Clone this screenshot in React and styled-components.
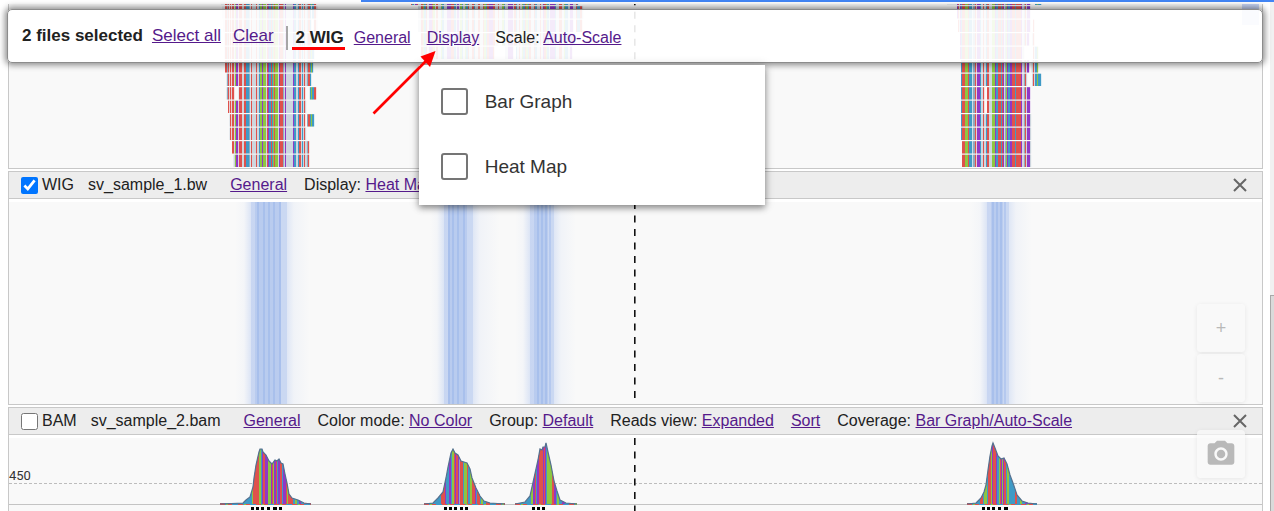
import React from "react";
import styled, { createGlobalStyle } from "styled-components";

const GlobalStyle = createGlobalStyle`
  * { box-sizing: border-box; }
  body {
    margin: 0;
    background: #fff;
    color: #212121;
    font: 16px/20px "Liberation Sans", Arial, sans-serif;
  }
`;

const R = "#df514c";
const G = "#8ec641";
const P = "#9038c6";
const B = "#3f9ac6";
const S = "#cdd6de";
const T = "#8fa9bd";

const Page = styled.div`
  position: relative;
  display: flex;
  flex-direction: column;
  height: 100vh;
  overflow: hidden;
`;

const LoadingBar = styled.div`
  flex: none;
  height: 2px;
  margin-left: 361px;
  background: #4285f4;
`;

const Content = styled.div`
  display: flex;
  flex: 1;
  min-height: 0;
`;

const Tracks = styled.main`
  display: flex;
  flex: 1;
  flex-direction: column;
  gap: 2px;
  min-width: 0;
  padding: 2px 7px 0 8px;
`;

const ScrollRail = styled.div`
  display: flex;
  width: 4px;
  padding-top: 293px;
  background: #f1f1f1;
`;

const ScrollThumb = styled.div`
  flex: 1;
  border-top: 1px solid #a8a8a8;
  border-left: 1px solid #a8a8a8;
  background: #dadada;
`;

const Track = styled.section`
  flex: none;
  border: 1px solid #c8c8c8;
  border-top-width: ${(p) => (p.$open ? 0 : 1)}px;
`;

const TrackHeader = styled.header`
  display: flex;
  align-items: center;
  gap: 17px;
  height: 27px;
  margin-bottom: 3px;
  padding: 0 15px 0 12px;
  border-bottom: 1px solid #c8c8c8;
  background: #ededed;
  white-space: nowrap;
`;

const FileLabel = styled.label`
  display: flex;
  align-items: center;
  gap: 4px;
  margin-right: 6px;
`;

const FileCheck = styled.input`
  width: 17px;
  height: 17px;
  margin: 0;
  accent-color: #0075ff;
`;

const FileName = styled.span`
  margin-left: 10px;
`;

const Link = styled.a`
  color: #551a8b;
  text-decoration: underline;
  font-size: ${(p) => (p.$large ? 17 : 16)}px;
`;

const CloseButton = styled.button`
  display: flex;
  margin-left: auto;
  padding: 0;
  border: 0;
  background: none;
  color: #666;
`;

const Canvas = styled.svg`
  display: block;
  width: 100%;
  height: ${(p) => p.$height}px;
  background: #f9f9f9;
`;

const Toolbar = styled.div`
  position: absolute;
  top: 9px;
  left: 7px;
  right: 11px;
  display: flex;
  align-items: center;
  padding: 16px 14px 12px;
  border: 1px solid #8c8c8c;
  border-radius: 5px;
  background: rgba(255, 255, 255, 0.9);
  box-shadow: 0 0 6px 2px rgba(0, 0, 0, 0.45);
  white-space: nowrap;
`;

const Selection = styled.div`
  display: flex;
  gap: 12px;
  padding: 0 12px 4px 0;
  font-size: 17px;
`;

const Count = styled.strong`
  margin-right: -3px;
`;

const TypeGroup = styled.div`
  display: flex;
  align-items: baseline;
  gap: 16px;
  padding: 2px 0 0 4px;
  border-left: 2px solid #a6a6a6;
`;

const TypeCount = styled.strong`
  margin-right: -7px;
  padding: 0 1px 0 4px;
  border-bottom: 3px solid #f00;
  font-size: 17px;
  line-height: 18px;
`;

const MenuAnchor = styled.div`
  position: relative;
`;

const Menu = styled.ul`
  position: absolute;
  top: 37px;
  left: -8px;
  width: 346px;
  margin: 0;
  padding: 4px 0 6px;
  background: #fff;
  box-shadow: 0 3px 6px rgba(0, 0, 0, 0.35), 0 1px 10px rgba(0, 0, 0, 0.2);
  list-style: none;
`;

const MenuOption = styled.label`
  display: flex;
  align-items: center;
  gap: 17px;
  height: 65px;
  padding: 0 22px;
  color: #333;
  font-size: 19px;
`;

const MenuCheck = styled.input`
  appearance: none;
  width: 27px;
  height: 27px;
  margin: 0;
  border: 2px solid #757575;
  border-radius: 3px;
  background: #fff;
`;

const FloatingControls = styled.div`
  position: absolute;
  top: 304px;
  right: 29px;
  display: flex;
  flex-direction: column;
  gap: 2px;
`;

const FloatButton = styled.button`
  display: flex;
  align-items: center;
  justify-content: center;
  width: 48px;
  height: 48px;
  margin-top: ${(p) => (p.$apart ? 26 : 0)}px;
  padding: 0;
  border: 0;
  border-radius: 4px;
  background: rgba(250, 250, 250, 0.7);
  box-shadow: 0 1px 5px rgba(0, 0, 0, 0.08);
  color: #b9b9b9;
  font: 18px "Liberation Sans", Arial, sans-serif;
`;

const Annotation = styled.svg`
  position: absolute;
  top: 50px;
  left: 370px;
  pointer-events: none;
`;

const PILE_LEFT = [
  [225, 2, R], [227, 1, T], [228, 1, R], [230, 1, R], [232, 2, R], [234, 1, S], [235, 1, G],
  [236, 2, P], [239, 3, R], [242, 2, S], [244, 2, R], [246, 3, B], [249, 1, T], [251, 1, R],
  [252, 4, S], [256, 1, R], [257, 2, S], [259, 1, B], [260, 2, G], [262, 1, P], [263, 3, G],
  [266, 1, S], [267, 1, R], [268, 1, P], [269, 2, B], [271, 1, R], [272, 1, B], [273, 1, G],
  [274, 1, R], [275, 3, G], [278, 1, S], [279, 1, P], [280, 3, R], [283, 1, T], [284, 1, S],
  [285, 1, P], [286, 7, S], [293, 1, P], [294, 2, B], [296, 2, S], [298, 1, B], [299, 2, R],
  [301, 1, S], [302, 1, B], [303, 1, S], [304, 1, R], [305, 2, S], [307, 1, T], [308, 2, R],
  [310, 1, B], [311, 1, G], [312, 2, B], [314, 2, R],
];

const PILE_RIGHT = [
  [957, 1, P], [958, 1, R], [959, 1, S], [960, 1, P], [961, 1, B], [962, 3, R], [965, 3, G],
  [968, 1, R], [969, 3, B], [973, 2, T], [975, 1, R], [977, 3, P], [980, 1, B], [981, 2, S],
  [983, 1, R], [984, 2, S], [986, 1, B], [987, 2, R], [989, 3, S], [992, 3, G], [995, 1, P],
  [996, 2, B], [998, 3, R], [1001, 1, B], [1002, 1, R], [1003, 1, P], [1004, 1, S], [1005, 1, T],
  [1006, 1, G], [1007, 1, P], [1008, 2, B], [1010, 2, P], [1012, 3, R], [1015, 1, B],
  [1016, 5, R], [1021, 1, P], [1023, 1, S], [1024, 1, T], [1025, 1, R], [1026, 1, S],
  [1027, 3, P], [1030, 1, S], [1032, 1, S], [1033, 1, R], [1034, 1, S], [1035, 2, B],
  [1037, 1, G], [1038, 3, B],
];

const MIDDLE_COLORS = [R, S, B, P, S, G, R, B, S, R, P, S, B, G, S, R, S, P];
const PILE_MIDDLE = Array.from({ length: 122 }, (_, i) => [
  411 + i + (i >> 1),
  (i & 1) + 1,
  MIDDLE_COLORS[(i * 7 + (i >> 2) * 5 + (i >> 3)) % MIDDLE_COLORS.length],
]);

const ROWS_LEFT = [
  [[221, 316]], [[222, 311], [312, 318]], [[223, 311], [313, 318]], [[224, 312]], [[224, 314]],
  [[225, 313]], [[226, 311]], [[226, 234], [238, 305], [309, 316]], [[228, 306]],
  [[229, 305], [307, 314]], [[229, 306]], [[232, 309]], [[233, 309]],
];
const ROWS_MIDDLE = [
  [[411, 578]], [[418, 583]], [[418, 573], [576, 582]], [[421, 450], [454, 498], [502, 575]],
  [[421, 494], [505, 513], [516, 572]],
];
const ROWS_RIGHT = [
  [[947, 1031], [1035, 1042]], [[957, 1030]], [[958, 1030], [1033, 1034]],
  [[960, 1029], [1032, 1034]], [[960, 1024], [1033, 1038]], [[961, 1029], [1031, 1038]],
  [[961, 1027], [1032, 1041]], [[961, 984], [987, 1030]], [[961, 984], [987, 1030]],
  [[961, 1031]], [[961, 1031]], [[962, 1031]], [[962, 1031]],
];

function Pile({ stripes, rows }) {
  return rows.map((spans, row) =>
    spans.map(([from, to]) => (
      <React.Fragment key={row + "-" + from}>
        <rect x={from} y={-7.3 + row * 13.5} width={to - from} height="12.3" fill="#e6eaee" />
        {stripes
          .filter(([x]) => x >= from && x < to)
          .map(([x, w, color]) => (
            <rect
              key={x}
              x={x}
              y={-7.3 + row * 13.5}
              width={Math.min(w, to - x) + 0.15}
              height="12.3"
              fill={color}
            />
          ))}
      </React.Fragment>
    ))
  );
}

function CenterLine({ from, to }) {
  return (
    <line x1="634.8" x2="634.8" y1={from} y2={to} stroke="#111" strokeWidth="1.6" strokeDasharray="7 6.5" />
  );
}

const BANDS = [
  { halo: [235, 310], core: [251, 287], dark: [257, 263, 268, 273, 279] },
  { halo: [430, 500], core: [444, 473], dark: [448, 452, 457, 463] },
  { halo: [515, 576], core: [530, 554], dark: [537, 541, 545, 549] },
  { halo: [970, 1032], core: [987, 1009], dark: [992, 996, 1000, 1004] },
];

function HeatBand({ halo, core, dark, id }) {
  const width = halo[1] - halo[0];
  return (
    <>
      <linearGradient id={id}>
        <stop offset="0" stopColor="#8faeea" stopOpacity="0" />
        <stop offset={(core[0] - halo[0] - 7) / width} stopColor="#8faeea" stopOpacity="0.05" />
        <stop offset={(core[0] - halo[0]) / width} stopColor="#8faeea" stopOpacity="0.28" />
        <stop offset={(core[1] - halo[0]) / width} stopColor="#8faeea" stopOpacity="0.25" />
        <stop offset={(core[1] - halo[0] + 7) / width} stopColor="#8faeea" stopOpacity="0.08" />
        <stop offset="1" stopColor="#8faeea" stopOpacity="0" />
      </linearGradient>
      <rect x={halo[0]} y="202" width={width} height="202" fill={`url(#${id})`} />
      <rect x={core[0]} y="202" width={core[1] - core[0]} height="202" fill="#7d9fe6" opacity="0.2" />
      <rect x={core[0] + 4} y="202" width={core[1] - core[0] - 10} height="202" fill="#7d9fe6" opacity="0.2" />
      {dark.map((x) => (
        <rect key={x} x={x} y="202" width="2" height="202" fill="#6f94e3" opacity="0.22" />
      ))}
    </>
  );
}

const PEAKS = [
  {
    outline:
      "220,504 243,503 246,500 250,497 253,487 254,478 256,465 259,452 260,449 262,449 263,452 266,455 269,461 272,464 275,460 277,461 279,459 281,463 283,464 285,474 287,483 289,494 292,498 298,500 304,503 311,504",
    stripes: [
      [252, 1, G], [253, 6, R], [259, 2, G], [262, 1, P], [263, 2, R], [265, 3, P], [268, 3, G],
      [271, 1, P], [272, 1, R], [273, 1, G], [274, 2, P], [276, 1, R], [277, 1, B], [278, 2, P],
      [280, 2, R], [283, 3, P], [286, 1, R], [287, 1, G], [288, 5, R], [295, 2, G], [299, 2, P], [304, 7, R],
    ],
    dots: [251, 256, 261, 267, 273, 279],
    wide: 273,
  },
  {
    outline:
      "424,504 433,503 438,498 443,492 446,478 448,467 451,453 453,449 455,453 458,455 461,461 464,462 467,463 470,469 472,478 476,488 480,496 484,501 490,503 505,504",
    stripes: [
      [441, 4, R], [445, 1, P], [449, 2, P], [451, 1, B], [452, 2, G], [454, 1, R], [455, 1, P],
      [456, 2, R], [458, 1, P], [459, 1, T], [460, 3, R], [464, 3, G], [467, 1, R], [470, 2, G],
      [472, 3, R], [475, 1, P], [477, 3, R], [481, 2, G], [486, 4, R], [494, 2, G], [500, 5, R],
    ],
    dots: [444, 449, 454, 460, 465],
  },
  {
    outline:
      "515,504 525,502 530,496 534,478 538,460 540,449 542,450 543,447 545,447 546,443 548,452 551,465 554,481 557,491 560,500 566,503 577,504",
    stripes: [
      [531, 2, G], [533, 2, P], [535, 1, R], [537, 2, P], [539, 4, R], [543, 1, P], [544, 1, R],
      [545, 1, P], [547, 5, G], [552, 2, R], [554, 2, P], [557, 2, G], [562, 3, P], [572, 5, R],
    ],
    dots: [532, 537, 542],
  },
  {
    outline:
      "967,504 976,503 981,498 984,492 986,485 988,470 990,456 992,446 993,443 995,448 998,456 1001,459 1004,458 1007,464 1010,475 1013,483 1017,495 1022,501 1028,503 1037,504",
    stripes: [
      [980, 3, R], [984, 3, G], [988, 3, R], [991, 1, G], [992, 1, P], [993, 3, R], [996, 1, P],
      [999, 1, G], [1000, 1, R], [1001, 1, P], [1002, 1, G], [1003, 1, P], [1004, 2, R],
      [1007, 2, G], [1015, 2, R], [1020, 2, G], [1025, 4, P], [1031, 6, R],
    ],
    dots: [982, 987, 992, 998, 1004],
    wide: 1004,
  },
];

function CoveragePeak({ outline, stripes, dots, wide, id }) {
  const points = outline.split(" ");
  const start = points[0].split(",")[0];
  const end = points[points.length - 1].split(",")[0];
  const base = { x1: start, x2: end, y1: 504, y2: 504, strokeWidth: 2 };
  return (
    <>
      <clipPath id={id}>
        <polygon points={outline} />
      </clipPath>
      <line {...base} stroke={B} />
      <line {...base} stroke={R} strokeDasharray="5 3 4 6" />
      <line {...base} stroke={G} strokeDasharray="2 16" strokeDashoffset="-6" />
      <g clipPath={`url(#${id})`}>
        <rect x={start} y="440" width="95" height="66" fill={B} />
        {stripes.map(([x, w, color]) => (
          <rect key={x} x={x} y="440" width={w} height="66" fill={color} />
        ))}
      </g>
      <polyline points={outline} fill="none" stroke="#55718f" strokeWidth="1.2" />
      {dots.map((x) => (
        <rect key={x} x={x} y="507" width={x === wide ? 4 : 3} height="3" fill="#000" />
      ))}
    </>
  );
}

function Close() {
  return (
    <CloseButton aria-label="Close track">
      <svg width="14" height="14" viewBox="0 0 14 14" stroke="currentColor" strokeWidth="2">
        <path d="M1 1L13 13M13 1L1 13" />
      </svg>
    </CloseButton>
  );
}

function Setting({ name, value }) {
  return (
    <span>
      {name}: <Link href="#">{value}</Link>
    </span>
  );
}

function FileHeader({ type, file, checked, children }) {
  return (
    <TrackHeader>
      <FileLabel>
        <FileCheck type="checkbox" defaultChecked={checked} />
        {type}
        <FileName>{file}</FileName>
      </FileLabel>
      <Link href="#">General</Link>
      {children}
      <Close />
    </TrackHeader>
  );
}

export default function App() {
  return (
    <>
      <GlobalStyle />
      <Page>
        <LoadingBar />
        <Content>
          <Tracks>
            <Track $open>
              <Canvas $height={164}>
                <g transform="translate(-9 -4)">
                  <Pile stripes={PILE_LEFT} rows={ROWS_LEFT} />
                  <Pile stripes={PILE_MIDDLE} rows={ROWS_MIDDLE} />
                  <Pile stripes={PILE_RIGHT} rows={ROWS_RIGHT} />
                  <CenterLine from={-1.7} to={168} />
                  <rect x="1242" y="2" width="17" height="23" fill="#c8d5f5" />
                </g>
              </Canvas>
            </Track>
            <Track>
              <FileHeader type="WIG" file="sv_sample_1.bw" checked>
                <Setting name="Display" value="Heat Map" />
              </FileHeader>
              <Canvas $height={202}>
                <g transform="translate(-9 -202)">
                  {BANDS.map((band, i) => (
                    <HeatBand key={i} id={`band${i}`} {...band} />
                  ))}
                  <CenterLine from={202} to={404} />
                </g>
              </Canvas>
            </Track>
            <Track>
              <FileHeader type="BAM" file="sv_sample_2.bam">
                <Setting name="Color mode" value="No Color" />
                <Setting name="Group" value="Default" />
                <Setting name="Reads view" value="Expanded" />
                <Link href="#">Sort</Link>
                <Setting name="Coverage" value="Bar Graph/Auto-Scale" />
              </FileHeader>
              <Canvas $height={90}>
                <line x1="0" x2="100%" y1="45.5" y2="45.5" stroke="#bdbdbd" strokeDasharray="3 2" />
                <line x1="0" x2="100%" y1="66.5" y2="66.5" stroke="#c4c4c4" />
                <text x="0" y="42" fontFamily="Roboto, sans-serif" fontSize="13" fill="#333">
                  450
                </text>
                <g transform="translate(-9 -438)">
                  {PEAKS.map((peak, i) => (
                    <CoveragePeak key={i} id={`peak${i}`} {...peak} />
                  ))}
                  <CenterLine from={438} to={528} />
                </g>
              </Canvas>
            </Track>
          </Tracks>
          <ScrollRail>
            <ScrollThumb />
          </ScrollRail>
        </Content>

        <FloatingControls>
          <FloatButton aria-label="Zoom in">+</FloatButton>
          <FloatButton aria-label="Zoom out">-</FloatButton>
          <FloatButton $apart aria-label="Save picture">
            <svg width="32" height="32" viewBox="0 0 24 24" fill="currentColor">
              <circle cx="12" cy="12" r="3.2" />
              <path d="M9 2L7.17 4H4c-1.1 0-2 .9-2 2v12c0 1.1.9 2 2 2h16c1.1 0 2-.9 2-2V6c0-1.1-.9-2-2-2h-3.17L15 2H9zm3 15c-2.76 0-5-2.24-5-5s2.24-5 5-5 5 2.24 5 5-2.24 5-5 5z" />
            </svg>
          </FloatButton>
        </FloatingControls>

        <Toolbar>
          <Selection>
            <Count>2 files selected</Count>
            <Link $large href="#">Select all</Link>
            <Link $large href="#">Clear</Link>
          </Selection>
          <TypeGroup>
            <TypeCount>2 WIG</TypeCount>
            <Link href="#">General</Link>
            <MenuAnchor>
              <Link href="#">Display</Link>
              <Menu>
                <li>
                  <MenuOption>
                    <MenuCheck type="checkbox" />
                    Bar Graph
                  </MenuOption>
                </li>
                <li>
                  <MenuOption>
                    <MenuCheck type="checkbox" />
                    Heat Map
                  </MenuOption>
                </li>
              </Menu>
            </MenuAnchor>
            <Setting name="Scale" value="Auto-Scale" />
          </TypeGroup>
        </Toolbar>

        <Annotation width="70" height="68" viewBox="370 50 70 68">
          <line x1="373.5" y1="113.5" x2="427" y2="60" stroke="#f00" strokeWidth="2.6" />
          <polygon points="435.5,51 420.5,56.5 430,67" fill="#f00" />
        </Annotation>
      </Page>
    </>
  );
}
